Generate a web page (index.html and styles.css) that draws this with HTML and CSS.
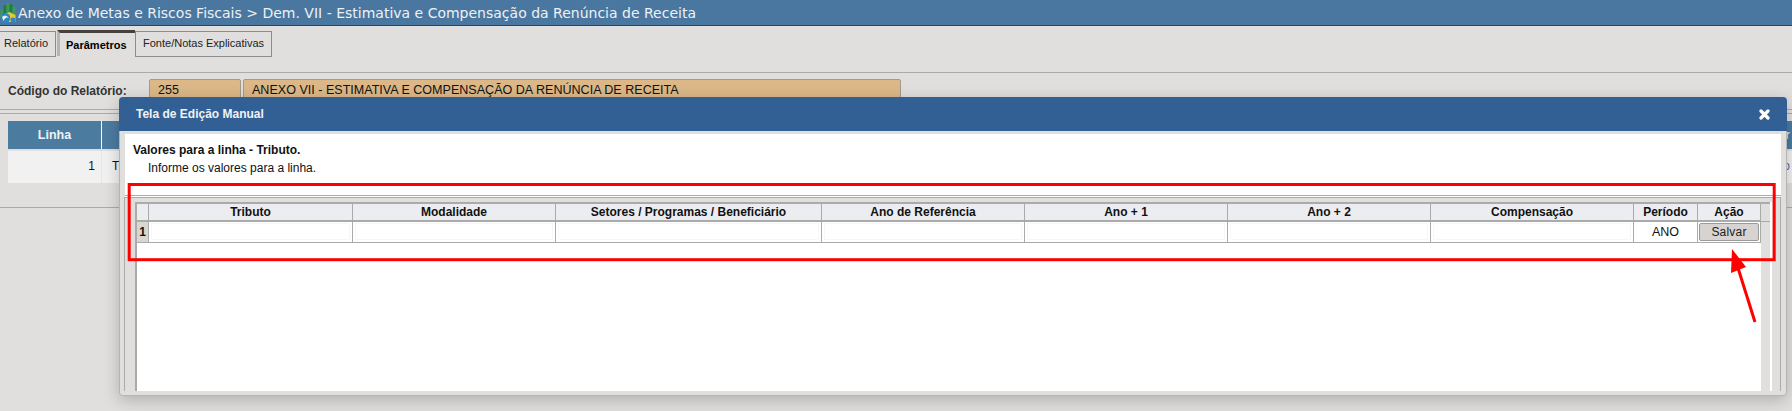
FILE: index.html
```html
<!DOCTYPE html>
<html lang="pt-BR">
<head>
<meta charset="utf-8">
<title>Anexo de Metas e Riscos Fiscais</title>
<link rel="stylesheet" href="styles.css">
</head>
<body>
<header class="topbar">
  <svg class="logo" width="17" height="20" viewBox="0 0 16 20">
    <rect x="0" y="6" width="3" height="8" fill="#3c9a52"/>
    <rect x="3" y="2" width="3" height="12" fill="#1f7f40"/>
    <rect x="6" y="0" width="3" height="13" fill="#3c9a52"/>
    <rect x="9" y="1" width="3" height="12" fill="#1f7f40"/>
    <rect x="12" y="4" width="3" height="11" fill="#3c9a52"/>
    <path d="M0 13 L9 9 L15 12 L15 19 L8 19 Z" fill="#e6c92f"/>
    <circle cx="5" cy="15" r="4.8" fill="#2f86c4"/>
    <path d="M1.5 14 Q5 10.5 8.5 15 Q5 13 3 18 Z" fill="#e8f1f6"/>
    <circle cx="12.5" cy="17" r="2.5" fill="#2f86c4"/>
  </svg>
  <h1 class="topbar-title">Anexo de Metas e Riscos Fiscais &gt; Dem. VII - Estimativa e Compensação da Renúncia de Receita</h1>
</header>

<nav class="tabs">
  <a class="tab tab-first">Relatório</a>
  <a class="tab tab-active">Parâmetros</a>
  <a class="tab tab-last">Fonte/Notas Explicativas</a>
</nav>

<section class="params">
  <label class="params-label">Código do Relatório:</label>
  <div class="field field-code">255</div>
  <div class="field field-name">ANEXO VII - ESTIMATIVA E COMPENSAÇÃO DA RENÚNCIA DE RECEITA</div>
</section>

<section class="list">
  <div class="list-row list-head">
    <div class="list-line">Linha</div>
    <div class="list-main list-main-head">Tributo</div>
    <div class="list-end">Editar</div>
  </div>
  <div class="list-row list-body">
    <div class="list-line num">1</div>
    <div class="list-main">Tributo</div>
    <div class="list-end link">Editado</div>
  </div>
</section>

<div class="modal">
  <div class="modal-title">
    <span>Tela de Edição Manual</span>
    <svg class="close" width="11" height="11" viewBox="0 0 11 11">
      <path d="M2 2 L9 9 M9 2 L2 9" stroke="#fff" stroke-width="3.2" stroke-linecap="round"/>
    </svg>
  </div>
  <div class="modal-body">
    <div class="intro">
      <p class="intro-title">Valores para a linha - Tributo.</p>
      <p class="intro-text">Informe os valores para a linha.</p>
    </div>
    <div class="frame">
      <div class="sheet">
        <div class="grid grid-head">
          <div class="cell corner"></div>
          <div class="cell">Tributo</div>
          <div class="cell">Modalidade</div>
          <div class="cell">Setores / Programas / Beneficiário</div>
          <div class="cell">Ano de Referência</div>
          <div class="cell">Ano + 1</div>
          <div class="cell">Ano + 2</div>
          <div class="cell">Compensação</div>
          <div class="cell">Período</div>
          <div class="cell">Ação</div>
          <div class="cell gutter-head"></div>
        </div>
        <div class="sheet-body">
          <div class="grid grid-row">
            <div class="cell row-no">1</div>
            <div class="cell"><input class="cell-input" type="text"></div>
            <div class="cell"><input class="cell-input" type="text"></div>
            <div class="cell"><input class="cell-input" type="text"></div>
            <div class="cell"><input class="cell-input" type="text"></div>
            <div class="cell"><input class="cell-input" type="text"></div>
            <div class="cell"><input class="cell-input" type="text"></div>
            <div class="cell"><input class="cell-input" type="text"></div>
            <div class="cell cell-text">ANO</div>
            <div class="cell cell-action"><button class="btn" type="button">Salvar</button></div>
          </div>
        </div>
      </div>
    </div>
  </div>
</div>

<svg class="annotation" width="1792" height="411" viewBox="0 0 1792 411">
  <rect x="129.2" y="184.5" width="1645" height="75.2" fill="none" stroke="#ff0000" stroke-width="3"/>
  <path d="M1755 322 L1738 268" stroke="#ff0000" stroke-width="3" fill="none"/>
  <path d="M1732 249 L1731 273 L1746 267 Z" fill="#ff0000"/>
</svg>
</body>
</html>
```
FILE: styles.css
```css
* { box-sizing: border-box; }
html, body { height: 100%; }
body {
  margin: 0;
  overflow: hidden;
  position: relative;
  background: #e0dfdd;
  color: #111;
  font-family: "Liberation Sans", Arial, sans-serif;
  font-size: 12px;
}

.topbar {
  height: 26px;
  display: flex;
  align-items: flex-start;
  background: #4a779f;
  border-bottom: 1px solid #33434f;
}
.logo { flex: none; margin: 3px 1px 0 0; }
.topbar-title {
  margin: 3px 0 0;
  font-family: "DejaVu Sans", sans-serif;
  font-size: 14px;
  line-height: 20px;
  font-weight: 400;
  color: #edf1f5;
  white-space: nowrap;
}

.tabs {
  display: flex;
  height: 47px;
  padding-top: 5px;
  align-items: flex-start;
  border-bottom: 1px solid #aaa;
}
.tab {
  height: 26px;
  border: 1px solid #8c8c8c;
  border-left: 0;
  font-size: 11px;
  line-height: 22px;
  color: #222;
}
.tab-first { width: 56px; padding-left: 4px; }
.tab-active {
  width: 78px;
  height: 26px;
  margin: -1px 0 0 1px;
  border: 0;
  border-top: 3px solid #44413f;
  border-left: 3px solid #b4b4b2;
  padding-left: 6px;
  font-weight: 700;
  line-height: 25px;
  color: #000;
}
.tab-last { width: 137px; padding-left: 7px; border-left: 1px solid #8c8c8c; }

.params {
  display: flex;
  height: 37px;
  padding: 6px 0 0 8px;
  border-bottom: 1px solid #aaa;
  align-items: flex-start;
}
.params-label {
  width: 141px;
  margin-top: 5px;
  font-weight: 700;
  font-size: 12px;
  line-height: 14px;
  color: #333;
}
.field {
  height: 26px;
  border: 1px solid #a39a8c;
  border-radius: 2px 2px 0 0;
  background: #dcb888;
  font-size: 12.55px;
  line-height: 20px;
  color: #111;
}
.field-code { width: 92px; padding-left: 8px; }
.field-name { width: 658px; margin-left: 2px; padding-left: 8px; }

.list {
  margin-top: 3px;
  height: 95px;
  padding: 7px 0 0 8px;
  border-top: 1px solid #aaa;
  border-bottom: 1px solid #aaa;
}
.list-row { display: flex; }
.list-head {
  height: 28px;
  background: #4c7ba0;
  color: #eef2f6;
  font-weight: 700;
  font-size: 12.5px;
  line-height: 28px;
}
.list-body {
  height: 32px;
  margin-top: 2px;
  background: #f1f1f1;
  line-height: 31px;
}
.list-line { width: 94px; border-right: 1px solid #fff; text-align: center; }
.list-body .list-line { border-right-color: #e6e6e6; }
.num { text-align: right; padding-right: 6px; }
.list-main { flex: 1; padding-left: 10px; }
.list-main-head { text-align: center; }
.list-end { width: 60px; padding-right: 2px; text-align: right; }
.link { color: #4a6f9c; }

.modal {
  position: absolute;
  left: 119px;
  top: 97px;
  width: 1668px;
  height: 299px;
  display: flex;
  flex-direction: column;
  border-radius: 4px;
  background: #e0dfdd;
  box-shadow: 0 4px 16px rgba(0, 0, 0, .22);
}
.modal-title {
  flex: none;
  height: 34px;
  display: flex;
  align-items: center;
  justify-content: space-between;
  padding: 0 17px 0 17px;
  border-radius: 4px 4px 0 0;
  background: #336094;
  color: #eef2f7;
  font-weight: 700;
  font-size: 12px;
}
.modal-body {
  flex: 1;
  min-height: 0;
  display: flex;
  flex-direction: column;
  padding: 3px 5px 4px 4px;
  border: 1px solid #b6b5b3;
  border-top: 0;
  border-radius: 0 0 4px 4px;
}
.intro {
  flex: none;
  height: 62px;
  margin-left: 1px;
  padding: 7px 0 0 8px;
  background: #fff;
  border-bottom: 1px solid #aaa;
  box-shadow: 0 1px 0 #fff;
}
.intro p { margin: 0; font-size: 12px; line-height: 18px; color: #111; }
.intro-title { font-weight: 700; margin-left: -1px; }
.intro-text { padding-left: 15px; }

.frame {
  flex: 1;
  min-height: 0;
  display: flex;
  margin-top: 1px;
  padding: 4px 9px 0 10px;
  border: 1px solid #aaa;
  border-bottom: 0;
}
.sheet {
  flex: 1;
  display: flex;
  flex-direction: column;
  border-right: 2px solid #fff;
}
.grid {
  display: grid;
  grid-template-columns: 12px 204px 203px 266px 203px 203px 203px 203px 64px 63px 9px;
}
.grid-head {
  height: 20px;
  border-top: 2px solid #aaa;
  border-bottom: 2px solid #aaa;
  border-left: 2px solid #aaa;
  background: #ecedf1;
  font-weight: 700;
  font-size: 12px;
  line-height: 17px;
  text-align: center;
}
.cell { border-right: 1px solid #aaa; }
.grid-head .gutter-head { border-right: 0; background: #e0dfdd; }
.sheet-body {
  flex: 1;
  margin-right: 9px;
  border-left: 2px solid #aaa;
  background: #fff;
}
.grid-row {
  height: 21px;
  grid-template-columns: 12px 204px 203px 266px 203px 203px 203px 203px 64px 63px;
  border-bottom: 1px solid #aaa;
}
.row-no {
  background: #ddd6cc;
  font-weight: 700;
  font-size: 12px;
  line-height: 20px;
  text-align: center;
}
.cell-input {
  display: block;
  width: calc(100% - 4px);
  height: 17px;
  margin: 1px 2px;
  padding: 0;
  border: 1px solid #f7f7f7;
  background: #fff;
}
.cell-text { font-size: 12.5px; line-height: 20px; text-align: center; }
.cell-action { padding: 1px; }
.btn {
  display: block;
  width: 100%;
  height: 18px;
  padding: 0;
  border: 1px solid #9a9a9a;
  border-radius: 2px;
  background: #d6d3d1;
  color: #222;
  font-family: inherit;
  font-size: 12px;
  letter-spacing: .2px;
}

.annotation { position: absolute; left: 0; top: 0; pointer-events: none; }
```
